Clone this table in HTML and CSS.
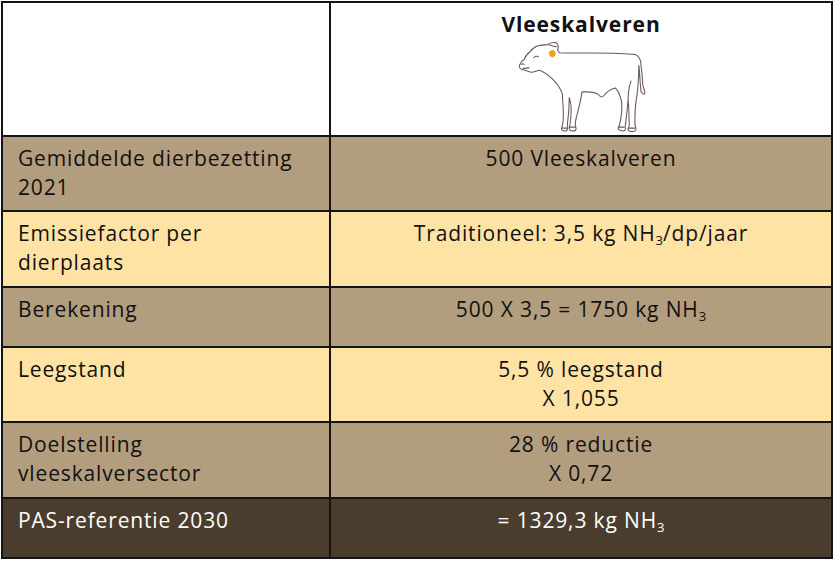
FILE: index.html
```html
<!DOCTYPE html>
<html lang="nl">
<head>
<meta charset="utf-8">
<title>Vleeskalveren</title>
<link rel="stylesheet" href="styles.css">
</head>
<body>
<div class="table">
  <div class="cell head-empty"></div>
  <div class="cell head">
    <div class="head-title">Vleeskalveren</div>
    <svg class="calf" viewBox="507 35 150 100" width="150" height="100" aria-hidden="true">
      <g fill="#fff" stroke="#6e5858" stroke-width="1.1" stroke-linejoin="round" stroke-linecap="round">
        <path d="M547,43 C550,41 554,40 557,41 C559,43 559,46 558,48 L560,51
                 C580,52 615,50 638,53 C641,55 643,58 643,62
                 C644,70 645,78 645,84 C646,88 648,91 647,93 C645,94 643,92 643,88 C642,80 642,70 641,64
                 C641,75 640,90 638,102 C637,110 637,118 637,124 C638,127 639,130 637,131 C634,132 631,131 630,130
                 C631,127 632,124 631,120 C631,112 631,106 630,100
                 C629,110 628,120 627,127 C628,129 627,131 625,131 C623,131 621,130 620,129
                 C621,126 622,122 623,116 C624,108 624,100 622,96 C621,92 619,89 617,87
                 C613,88 609,90 606,94 C604,97 602,97 600,94 C597,91 592,91 587,91 L583,91
                 C582,100 579,110 577,118 C576,122 576,126 577,128 C577,130 576,131 574,131 C572,131 570,130 570,129
                 C571,124 572,116 572,108 C572,104 571,100 570,97
                 C570,108 569,118 568,125 C569,128 568,131 566,131 C564,131 562,130 562,129
                 C563,126 564,120 564,114 C564,106 563,98 563,93
                 C561,88 559,84 555,80 C551,76 545,71 540,69
                 C536,70 533,71 531,71 C528,70 525,69 521,68
                 C519,67 519,65 519,64 C520,61 522,59 524,58
                 C525,55 527,52 530,50 C532,47 535,45 538,44
                 C541,43 544,43 547,43 Z"/>
        <path d="M562,128 L568,128 M570,127 L576,127 M620,127 L626,127 M630,128 L637,128" fill="none"/>
        <path d="M633,80 C631,86 630,92 630,100" fill="none"/>
        <path d="M549,43 C552,44 555,45 557,45" fill="none"/>
        <path d="M534,56 C535,54.5 537,54.5 538.5,55" fill="none"/>
        <path d="M521,63 C522,62 523,62 524,63" fill="none"/>
        <path d="M523,67 C525,67 527,66.5 529,66.5" fill="none"/>
      </g>
      <path d="M549,50 L553,48 L556,50 L556,53.5 L553,56 L550,54.5 Z" fill="#f0a01c"/>
    </svg>
  </div>

  <div class="cell label tan">Gemiddelde dierbezetting 2021</div>
  <div class="cell value tan">500 Vleeskalveren</div>

  <div class="cell label cream">Emissiefactor per dierplaats</div>
  <div class="cell value cream">Traditioneel: 3,5 kg NH<sub>3</sub>/dp/jaar</div>

  <div class="cell label tan">Berekening</div>
  <div class="cell value tan">500 X 3,5 = 1750 kg NH<sub>3</sub></div>

  <div class="cell label cream">Leegstand</div>
  <div class="cell value cream">5,5 % leegstand<br>X 1,055</div>

  <div class="cell label tan">Doelstelling vleeskalversector</div>
  <div class="cell value tan">28 % reductie<br>X 0,72</div>

  <div class="cell label dark">PAS-referentie 2030</div>
  <div class="cell value dark">= 1329,3 kg NH<sub>3</sub></div>
</div>
</body>
</html>
```

FILE: styles.css
```css
html, body {
  margin: 0;
  padding: 0;
  background: #ffffff;
}

body {
  font-family: "Open Sans", "Noto Sans", "Liberation Sans", sans-serif;
  color: #111111;
}

.table {
  margin: 1px 0 0 1px;
  width: 832px;
  box-sizing: border-box;
  display: grid;
  grid-template-columns: 326px 1fr;
  grid-template-rows: 132px 73px 74px 58px 73px 74px 58px;
  gap: 2px;
  padding: 2px;
  background: #141414;
}

.cell {
  font-size: 21px;
  line-height: 29px;
  letter-spacing: 0.85px;
  box-sizing: border-box;
}

.head-empty,
.head {
  background: #ffffff;
}

.head {
  display: flex;
  flex-direction: column;
  align-items: center;
  padding-top: 7px;
}

.head-title {
  font-weight: 700;
  font-size: 21px;
  line-height: 28px;
  letter-spacing: 0.9px;
}

.calf {
  display: block;
  margin-top: -1px;
}

.label {
  padding: 7px 20px 0 15px;
}

.value {
  text-align: center;
  padding: 7px 10px 0;
}

.tan {
  background: #b39d7f;
}

.cream {
  background: #ffe3a5;
}

.dark {
  background: #4b3d2d;
  color: #ffffff;
}

sub {
  font-size: 0.62em;
  line-height: 0;
  vertical-align: -0.3em;
  letter-spacing: 0;
}
```
